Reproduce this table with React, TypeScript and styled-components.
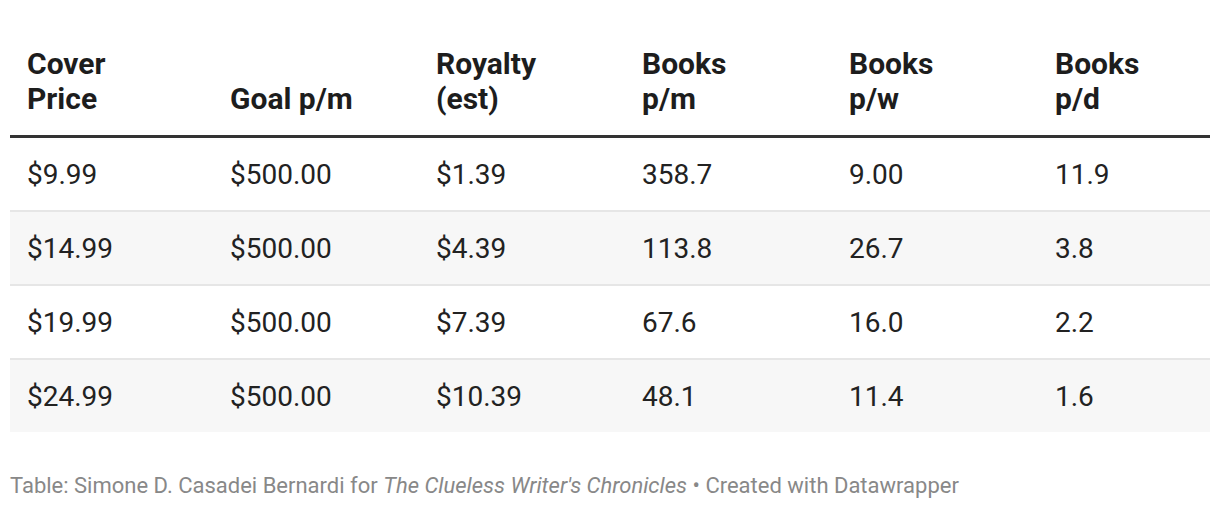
import { FC } from "react";
import styled, { createGlobalStyle } from "styled-components";

const GlobalStyle = createGlobalStyle`
  html, body {
    margin: 0;
    padding: 0;
    background: #ffffff;
  }

  body {
    font-family: Roboto, "Liberation Sans", Arial, sans-serif;
    color: #1d1d1d;
  }
`;

const columns = [
  { title: ["Cover", "Price"], width: 203 },
  { title: ["Goal p/m"], width: 206 },
  { title: ["Royalty", "(est)"], width: 206 },
  { title: ["Books", "p/m"], width: 207 },
  { title: ["Books", "p/w"], width: 206 },
  { title: ["Books", "p/d"], width: 172 },
];

const rows = [
  ["$9.99", "$500.00", "$1.39", "358.7", "9.00", "11.9"],
  ["$14.99", "$500.00", "$4.39", "113.8", "26.7", "3.8"],
  ["$19.99", "$500.00", "$7.39", "67.6", "16.0", "2.2"],
  ["$24.99", "$500.00", "$10.39", "48.1", "11.4", "1.6"],
];

const App: FC = () => {
  return (
    <>
      <GlobalStyle />
      <Chart>
        <Table>
          <colgroup>
            {columns.map((column) => (
              <col key={column.title.join(" ")} style={{ width: column.width }} />
            ))}
          </colgroup>
          <thead>
            <tr>
              {columns.map((column) => (
                <HeadCell key={column.title.join(" ")}>
                  {column.title.map((line) => (
                    <HeadLine key={line}>{line}</HeadLine>
                  ))}
                </HeadCell>
              ))}
            </tr>
          </thead>
          <tbody>
            {rows.map((row, index) => (
              <Row key={row[0]} $striped={index % 2 === 1} $last={index === rows.length - 1}>
                {row.map((value, i) => (
                  <Cell key={i}>{value}</Cell>
                ))}
              </Row>
            ))}
          </tbody>
        </Table>

        <Footer>
          Table: Simone D. Casadei Bernardi for{" "}
          <em>The Clueless Writer's Chronicles</em> • Created with Datawrapper
        </Footer>
      </Chart>
    </>
  );
};

const Chart = styled.div`
  width: 1200px;
  padding: 46px 10px 0;
`;

const Table = styled.table`
  width: 1200px;
  table-layout: fixed;
  border-collapse: collapse;
  border-spacing: 0;
`;

const HeadCell = styled.th`
  text-align: left;
  vertical-align: bottom;
  padding: 0 17px 19px;
  font-size: 30px;
  font-weight: 700;
  line-height: 35px;
  color: #1d1d1d;
  border-bottom: 3px solid #333333;
`;

const HeadLine = styled.div`
  white-space: nowrap;
`;

const Row = styled.tr<{ $striped: boolean; $last: boolean }>`
  background-color: ${({ $striped }) => ($striped ? "#f7f7f7" : "#ffffff")};
  border-bottom: ${({ $last }) => ($last ? "none" : "2px solid #e6e6e6")};
`;

const Cell = styled.td`
  height: 70px;
  padding: 2px 17px 0;
  font-size: 28px;
  line-height: 32px;
  vertical-align: middle;
  color: #222222;
`;

const Footer = styled.p`
  margin: 42px 0 0;
  font-size: 22px;
  line-height: 24px;
  color: #888888;
  white-space: nowrap;

  em {
    font-style: italic;
  }
`;

export default App;
